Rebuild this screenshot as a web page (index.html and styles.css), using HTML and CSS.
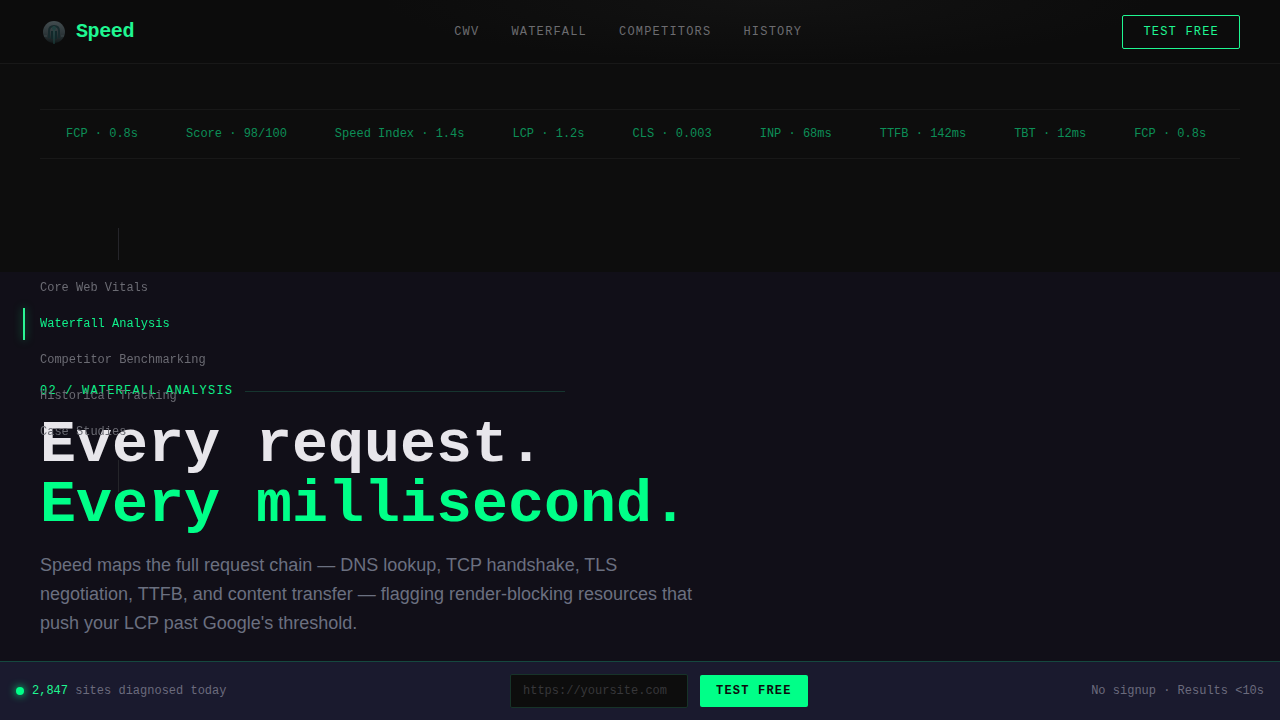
FILE: index.html
```
<!DOCTYPE html>
<html lang="en">
<head>
    <meta charset="UTF-8">
    <meta name="viewport" content="width=device-width, initial-scale=1.0">
    <title>Speed</title>
    <link rel="stylesheet" href="styles.css">
</head>
<body>
    <header class="header">
        <a href="#" class="logo">
            <svg class="logo-icon" viewBox="0 0 28 28" aria-hidden="true">
                <defs>
                    <linearGradient id="disc" x1="0" y1="0" x2="0" y2="1">
                        <stop offset="0" stop-color="#434d50"/>
                        <stop offset="0.6" stop-color="#2c3538"/>
                        <stop offset="1" stop-color="#12191a"/>
                    </linearGradient>
                </defs>
                <circle cx="14" cy="14" r="11" fill="url(#disc)"/>
                <path d="M9 20v-7c0-3 2-5 5-5s5 2 5 5v7" fill="none" stroke="#182a2d" stroke-width="2"/>
                <path d="M12 13v8M16 13v8" stroke="#12282a" stroke-width="2"/>
                <path d="M14 8v18" stroke="#1f4a48" stroke-width="1"/>
                <circle cx="14" cy="10" r="2" fill="#20403f"/>
                <path d="M4 18h3M21 18h3" stroke="#3d484a"/>
            </svg>
            <span>Speed</span>
        </a>
        <nav class="nav">
            <a href="#cwv">CWV</a>
            <a href="#waterfall">WATERFALL</a>
            <a href="#competitors">COMPETITORS</a>
            <a href="#history">HISTORY</a>
        </nav>
        <button type="button" class="btn-outline">TEST FREE</button>
    </header>

    <aside class="side-nav">
        <span class="side-line"></span>
        <ul>
            <li><a href="#cwv">Core Web Vitals</a></li>
            <li><a href="#waterfall" class="active">Waterfall Analysis</a></li>
            <li><a href="#competitors">Competitor Benchmarking</a></li>
            <li><a href="#history">Historical Tracking</a></li>
            <li><a href="#cases">Case Studies</a></li>
        </ul>
        <span class="side-line"></span>
    </aside>

    <main>
        <div class="intro">
            <div class="ticker">
                <span>FCP · 0.8s</span>
                <span>Score · 98/100</span>
                <span>Speed Index · 1.4s</span>
                <span>LCP · 1.2s</span>
                <span>CLS · 0.003</span>
                <span>INP · 68ms</span>
                <span>TTFB · 142ms</span>
                <span>TBT · 12ms</span>
                <span>FCP · 0.8s</span>
            </div>
        </div>
        <section class="waterfall" id="waterfall">
            <div class="section-label">02 / WATERFALL ANALYSIS</div>
            <h1>Every request.<br><span class="green">Every millisecond.</span></h1>
            <p>Speed maps the full request chain — DNS lookup, TCP handshake, TLS negotiation, TTFB, and content transfer — flagging render-blocking resources that push your LCP past Google's threshold.</p>
        </section>
    </main>

    <div class="bottom-bar">
        <div class="stats">
            <span class="dot"></span>
            <span><span class="count">2,847</span> sites diagnosed today</span>
        </div>
        <form class="test-form">
            <input type="url" aria-label="Site URL" placeholder="https://yoursite.com">
            <button type="submit">TEST FREE</button>
        </form>
        <div class="note">No signup · Results &lt;10s</div>
    </div>
</body>
</html>
```
FILE: styles.css
```
* {
    box-sizing: border-box;
    margin: 0;
    padding: 0;
}

body {
    display: flex;
    flex-direction: column;
    min-height: 100vh;
    background: #0d0d0d;
    color: #e8e6eb;
    font-family: "Liberation Mono", monospace;
    font-size: 12px;
    line-height: 16px;
}

a {
    color: inherit;
    text-decoration: none;
}

.header {
    position: sticky;
    top: 0;
    z-index: 10;
    display: flex;
    align-items: center;
    justify-content: space-between;
    height: 64px;
    padding: 0 40px;
    background: radial-gradient(ellipse 30% 100% at 60% 0, #121212, #0c0c0c);
    border-bottom: 1px solid #181818;
}

.logo {
    display: flex;
    align-items: center;
    gap: 8px;
    color: #1ff792;
    font-size: 20px;
    font-weight: bold;
    line-height: 24px;
    letter-spacing: -0.02em;
}

.logo-icon {
    width: 28px;
    height: 28px;
}

.nav {
    display: flex;
    gap: 32px;
    color: #6c6c70;
    letter-spacing: 0.1em;
}

.btn-outline {
    height: 34px;
    padding: 0 20px;
    background: transparent;
    border: 1px solid #1ff792;
    border-radius: 2px;
    color: #1ff792;
    font: inherit;
    letter-spacing: 0.1em;
}

main {
    display: flex;
    flex: 1;
    flex-direction: column;
}

.intro {
    padding: 45px 40px 113px;
}

.ticker {
    display: flex;
    gap: 48px;
    padding: 16px 26px;
    border-top: 1px solid #181818;
    border-bottom: 1px solid #181818;
    color: #0c8f57;
    white-space: nowrap;
    overflow: hidden;
}

.waterfall {
    flex: 1;
    padding: 111px 40px 80px;
    background: #110f18;
}

.section-label {
    display: flex;
    align-items: center;
    gap: 12px;
    color: #0ff08a;
    letter-spacing: 0.1em;
}

.section-label::after {
    content: "";
    width: 320px;
    height: 1px;
    background: #16352f;
}

h1 {
    margin-top: 16px;
    font-size: 60px;
    line-height: 60px;
}

.green {
    color: #00ff88;
}

.waterfall p {
    max-width: 660px;
    margin-top: 16px;
    color: #6b7080;
    font-family: "Liberation Sans", sans-serif;
    font-size: 18px;
    line-height: 29px;
}

.side-nav {
    position: fixed;
    top: 50%;
    left: 24px;
    z-index: 5;
    display: flex;
    flex-direction: column;
    align-items: center;
    gap: 12px;
    width: 189px;
    transform: translateY(-50%);
    color: #6b6b73;
}

.side-nav ul {
    display: flex;
    flex-direction: column;
    gap: 4px;
    width: 100%;
    list-style: none;
}

.side-nav a {
    position: relative;
    display: block;
    padding: 8px 16px;
    white-space: nowrap;
}

.side-nav .active {
    color: #0ff08a;
}

.side-nav .active::before {
    content: "";
    position: absolute;
    top: 0;
    bottom: 0;
    left: -1px;
    width: 2px;
    background: #2bf594;
    box-shadow: 0 0 8px rgba(0, 255, 136, 0.5);
}

.side-line {
    width: 1px;
    height: 32px;
    background: #25252a;
}

.bottom-bar {
    position: fixed;
    right: 0;
    bottom: 0;
    left: 0;
    z-index: 10;
    display: flex;
    align-items: center;
    justify-content: space-between;
    padding: 12px 16px;
    background: #1a1a2e;
    border-top: 1px solid #15483f;
    color: #6b6b7d;
}

.stats {
    display: flex;
    align-items: center;
    gap: 8px;
}

.dot {
    width: 8px;
    height: 8px;
    border-radius: 50%;
    background: #00ff88;
    box-shadow: 0 0 8px #00ff88;
}

.count {
    color: #1ff792;
}

.test-form {
    display: flex;
    align-items: center;
    gap: 12px;
}

.test-form input {
    width: 178px;
    height: 34px;
    padding: 0 12px;
    background: #0d0d0d;
    border: 1px solid #173329;
    border-radius: 2px;
    color: #e8e6eb;
    font: inherit;
}

.test-form input::placeholder {
    color: #37373a;
}

.test-form button {
    height: 32px;
    padding: 0 16px;
    background: #00ff88;
    border: none;
    border-radius: 2px;
    color: #0d0d0d;
    font: inherit;
    font-weight: bold;
    letter-spacing: 0.1em;
}
```
